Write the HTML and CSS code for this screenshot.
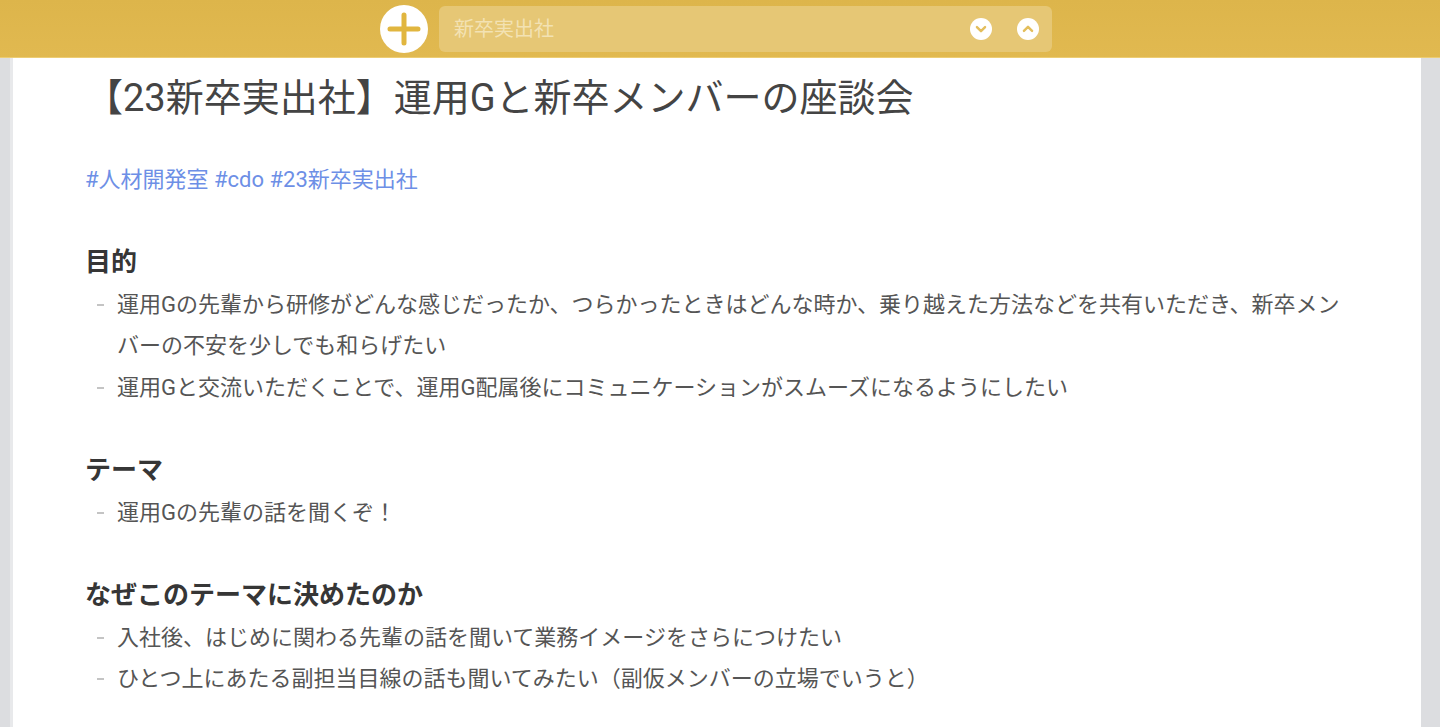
FILE: index.html
```html
<!DOCTYPE html>
<html>
<head>
  <meta charset="utf-8">
  <link rel="stylesheet" href="styles.css">
</head>
<body>
  <div class="navbar">
    <div class="navbar-inner">
      <button class="new-page" type="button" aria-label="new page">
        <svg width="48" height="48" viewBox="0 0 48 48">
          <circle cx="24" cy="24" r="24" fill="#fff"/>
          <path d="M24 10 V38 M10 24 H38" stroke="#e1b63f" stroke-width="5" stroke-linecap="round"/>
        </svg>
      </button>
      <div class="search">
        <input type="text" class="search-input" placeholder="新卒実出社">
        <span class="search-btn">
          <svg width="22" height="22" viewBox="0 0 20 20">
            <circle cx="10" cy="10" r="10" fill="#fff"/>
            <path d="M6.3 8.3 L10 12 L13.7 8.3" fill="none" stroke="#e3be5c" stroke-width="2.2" stroke-linecap="round" stroke-linejoin="round"/>
          </svg>
        </span>
        <span class="search-btn">
          <svg width="22" height="22" viewBox="0 0 20 20">
            <circle cx="10" cy="10" r="10" fill="#fff"/>
            <path d="M6.3 11.7 L10 8 L13.7 11.7" fill="none" stroke="#e3be5c" stroke-width="2.2" stroke-linecap="round" stroke-linejoin="round"/>
          </svg>
        </span>
      </div>
    </div>
  </div>

  <div class="app">
    <div class="page">
      <h1 class="title">【23新卒実出社】運用Gと新卒メンバーの座談会</h1>
      <div class="line tags">
        <a href="#">#人材開発室</a> <a href="#">#cdo</a> <a href="#">#23新卒実出社</a>
      </div>
      <div class="line"></div>
      <div class="line heading">目的</div>
      <div class="line item"><span class="dash"></span><span class="text">運用Gの先輩から研修がどんな感じだったか、つらかったときはどんな時か、乗り越えた方法などを共有いただき、新卒メンバーの不安を少しでも和らげたい</span></div>
      <div class="line item"><span class="dash"></span><span class="text">運用Gと交流いただくことで、運用G配属後にコミュニケーションがスムーズになるようにしたい</span></div>
      <div class="line"></div>
      <div class="line heading">テーマ</div>
      <div class="line item"><span class="dash"></span><span class="text">運用Gの先輩の話を聞くぞ！</span></div>
      <div class="line"></div>
      <div class="line heading">なぜこのテーマに決めたのか</div>
      <div class="line item"><span class="dash"></span><span class="text">入社後、はじめに関わる先輩の話を聞いて業務イメージをさらにつけたい</span></div>
      <div class="line item"><span class="dash"></span><span class="text">ひとつ上にあたる副担当目線の話も聞いてみたい（副仮メンバーの立場でいうと）</span></div>
      <div class="line"></div>
      <div class="line"></div>
    </div>
  </div>
</body>
</html>
```

FILE: styles.css
```css
html, body {
  margin: 0;
  height: 100%;
}
body {
  background-color: #dcdde0;
  font-family: Roboto, "Noto Sans CJK JP", sans-serif;
  overflow: hidden;
}
.navbar {
  height: 57px;
  background: linear-gradient(to bottom, #ddb54b, #e1b950);
  border-bottom: 1px solid #edcd74;
}
.navbar-inner {
  display: flex;
  align-items: center;
  height: 57px;
  padding-left: 380px;
}
.new-page {
  width: 48px;
  height: 48px;
  padding: 0;
  border: none;
  background: none;
  margin-right: 11px;
  cursor: pointer;
}
.new-page svg {
  display: block;
}
.search {
  display: flex;
  align-items: center;
  width: 613px;
  height: 46px;
  box-sizing: border-box;
  padding: 0 13px 0 15px;
  background-color: #e6c775;
  border-radius: 6px;
}
.search-input {
  flex: 1;
  border: none;
  background: none;
  outline: none;
  padding: 0;
  font-family: Roboto, "Noto Sans CJK JP", sans-serif;
  font-size: 20px;
  color: #fff;
}
.search-input::placeholder {
  color: #f3e2b3;
}
.search-btn {
  display: block;
  width: 22px;
  height: 22px;
  margin-left: 25px;
}
.search-btn svg {
  display: block;
}
.app {
  margin: 0 19px 0 13px;
}
.page {
  background-color: #fff;
  padding: 12px 69px 0 72px;
  min-height: 700px;
  box-shadow: -3px 0 0 #e8e9eb;
  color: #555;
}
.title {
  margin: 0 0 33px 0;
  font-size: 38px;
  font-weight: 400;
  line-height: 56px;
  color: #444;
}
.line {
  min-height: 41.6px;
  line-height: 41.6px;
  font-size: 22px;
}
.tags a {
  color: #6d8fe6;
  text-decoration: none;
}
.heading {
  font-size: 26px;
  font-weight: 700;
  color: #363636;
}
.item {
  display: flex;
}
.dash {
  flex: none;
  position: relative;
  width: 32px;
}
.dash::before {
  content: "";
  position: absolute;
  left: 12px;
  top: 20px;
  width: 7px;
  height: 2px;
  background-color: #c4c4c4;
}
.text {
  flex: 1;
}
```
